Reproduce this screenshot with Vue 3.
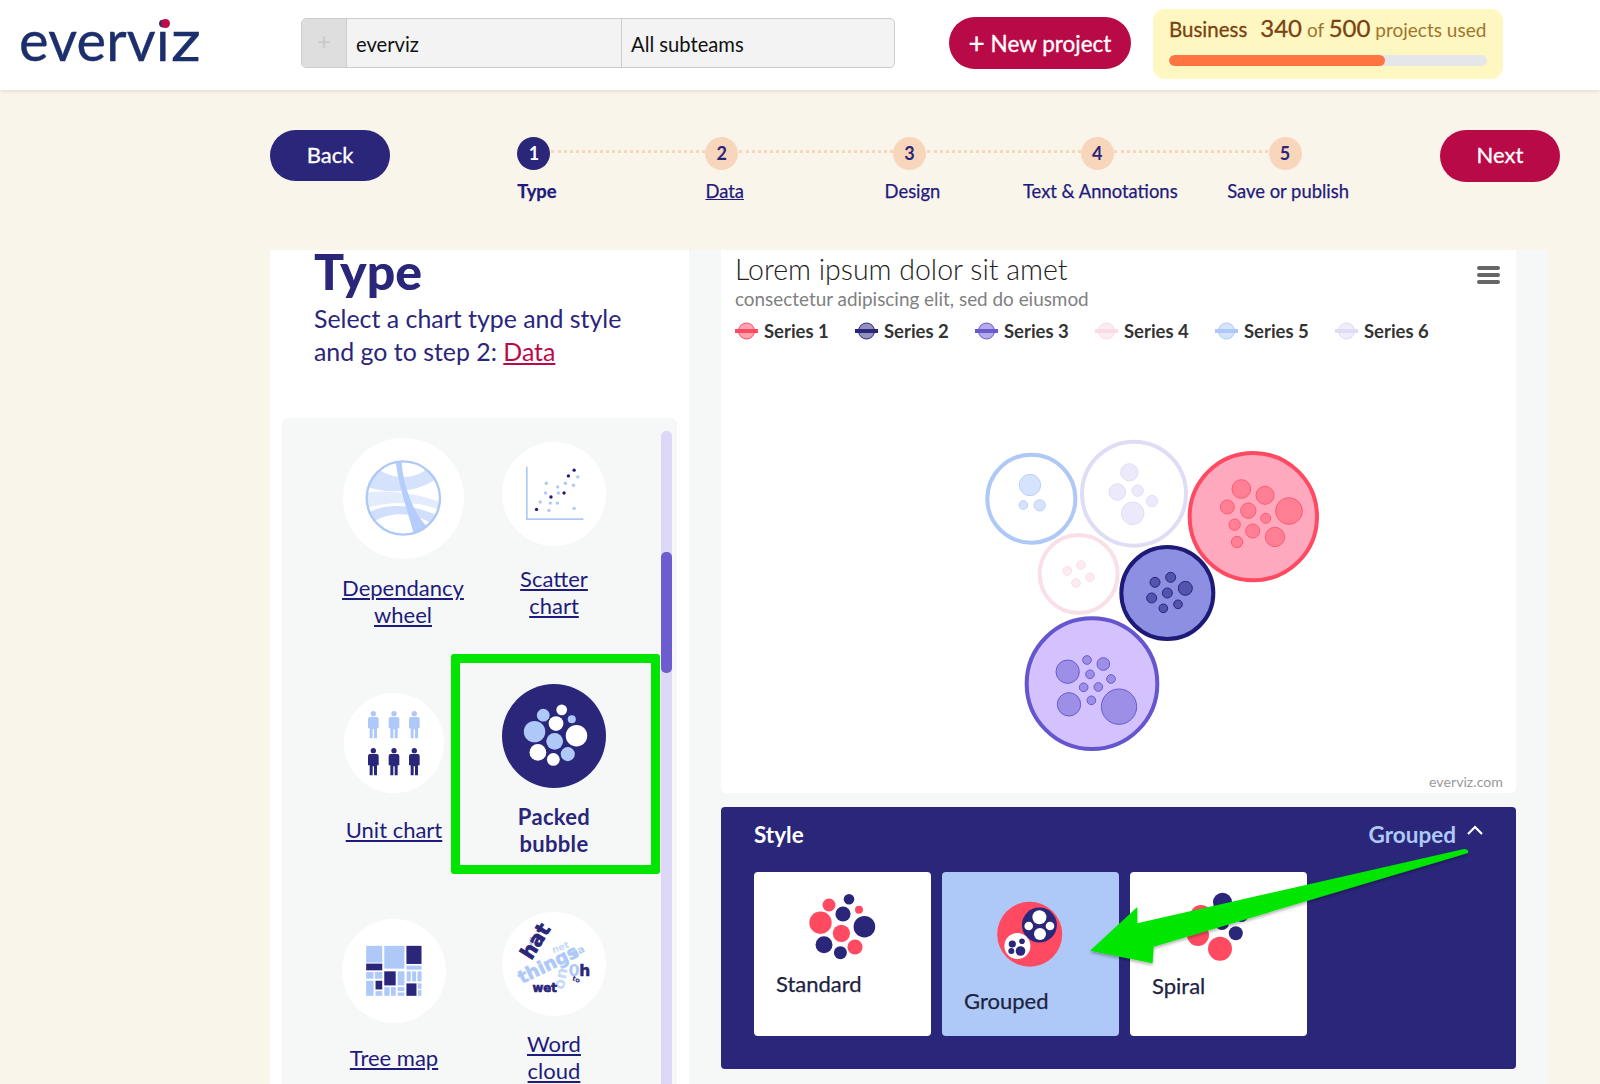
<script setup>
const steps = [
  { n: 1, label: 'Type', active: true },
  { n: 2, label: 'Data', link: true },
  { n: 3, label: 'Design' },
  { n: 4, label: 'Text & Annotations' },
  { n: 5, label: 'Save or publish' }
]

const legend = [
  { name: 'Series 1', color: '#ff4a62' },
  { name: 'Series 2', color: '#2a2679' },
  { name: 'Series 3', color: '#6a5ad0' },
  { name: 'Series 4', color: '#f9dbe6' },
  { name: 'Series 5', color: '#aec9f8' },
  { name: 'Series 6', color: '#dfdcf6' }
]

// coordinates are in the 1140x1020 viewBox of the chart
const groups = [
  { c: [214, 236, 132], fill: '#fff', stroke: '#aec9f8', innerFill: '#d6e3fd', innerStroke: '#b9d1fb',
    dots: [[210, 195, 32], [190, 255, 13], [239, 256, 17]] },
  { c: [522, 221, 156], fill: '#fff', stroke: '#dfdcf6', innerFill: '#ece9fa', innerStroke: '#e2dff7',
    dots: [[508, 157, 26], [472, 216, 25], [533, 212, 17], [576, 243, 17], [518, 280, 34]] },
  { c: [880, 290, 191], fill: '#ffa9bf', stroke: '#ff4a62', innerFill: '#ff7f95', innerStroke: '#ff5a72',
    dots: [[844, 207, 28], [915, 226, 27], [802, 261, 21], [865, 272, 23], [987, 273, 40], [917, 295, 15], [824, 314, 17], [878, 333, 21], [945, 351, 29], [831, 366, 17]] },
  { c: [356, 462, 117], fill: '#fff', stroke: '#f9dfe8', innerFill: '#fcecf2', innerStroke: '#f9dfe8',
    dots: [[322, 453, 13], [363, 435, 13], [390, 472, 13], [348, 489, 13]] },
  { c: [622, 519, 138], fill: '#8d90e2', stroke: '#1d1a78', innerFill: '#5454ae', innerStroke: '#2a2679',
    dots: [[585, 487, 15], [632, 472, 15], [676, 505, 21], [622, 519, 15], [575, 534, 15], [654, 553, 13], [610, 565, 13]] },
  { c: [396, 791, 196], fill: '#d3c2fd', stroke: '#6555cf', innerFill: '#9e8fe6', innerStroke: '#6a5ad0',
    dots: [[323, 755, 35], [381, 720, 13], [430, 732, 19], [390, 763, 13], [453, 777, 13], [371, 802, 13], [415, 801, 13], [327, 853, 35], [394, 841, 13], [477, 860, 53]] }
]

const scatterLight = [[829, 221], [863, 232], [886, 221], [923, 202], [910, 227], [827, 250], [865, 250], [811, 277], [841, 280], [862, 280], [837, 302], [912, 296]]
const scatterDark = [[912, 182], [895, 199], [843, 262], [882, 250], [800, 299]]

const packedLight = [[820, 165, 19], [905, 177, 12], [794, 214, 32], [854, 243, 25], [893, 281, 21]]
const packedWhite = [[875, 149, 16], [858, 190, 22], [919, 226, 32], [804, 276, 25], [850, 297, 19]]

const treeLight = [[290, 858, 48, 50], [344, 858, 60, 68], [410, 917, 45, 12], [290, 936, 22, 20], [316, 936, 22, 20], [384, 934, 20, 42], [411, 934, 12, 30], [427, 934, 12, 30], [443, 934, 12, 30], [290, 962, 22, 45], [318, 993, 20, 14], [344, 981, 16, 26], [364, 981, 14, 26], [384, 981, 20, 12], [384, 997, 20, 10], [444, 970, 11, 16], [444, 990, 11, 17]]
const treeDark = [[410, 858, 45, 54], [290, 911, 48, 20], [344, 934, 34, 42], [318, 962, 20, 26], [410, 970, 30, 37]]

const personPath = 'M-16 24 Q-16 18 -10 18 H10 Q16 18 16 24 V52 H11 V82 H2 V55 H-2 V82 H-11 V52 H-16 Z'
const people = [
  { x: 310, y: 152, fill: '#aec9f8' }, { x: 372, y: 152, fill: '#aec9f8' }, { x: 433, y: 152, fill: '#aec9f8' },
  { x: 310, y: 263, fill: '#2a2679' }, { x: 372, y: 263, fill: '#2a2679' }, { x: 433, y: 263, fill: '#2a2679' }
]
</script>

<template>
  <div class="page">
    <header class="topbar">
      <div class="logo">evervi<span class="logo-z">z</span><span class="logo-dot"></span></div>
      <div class="team-select">
        <span class="team-plus">+</span>
        <span class="team-cell team-name">everviz</span>
        <span class="team-cell">All subteams</span>
      </div>
      <button class="btn new-project"><span class="plus">+</span> New project</button>
      <div class="quota">
        <div class="quota-text">
          <span class="plan">Business</span>
          <b>340</b> <span class="soft">of</span> <b>500</b> <span class="soft">projects used</span>
        </div>
        <div class="quota-track"><div class="quota-fill" :style="{ width: (340 / 500) * 100 + '%' }"></div></div>
      </div>
    </header>

    <section class="wizard">
      <button class="btn back">Back</button>
      <ol class="steps">
        <li v-for="s in steps" :key="s.n" class="step" :class="{ active: s.active }">
          <span class="step-num">{{ s.n }}</span>
          <a v-if="s.link" class="step-label link">{{ s.label }}</a>
          <span v-else class="step-label">{{ s.label }}</span>
        </li>
      </ol>
      <button class="btn next">Next</button>
    </section>

    <main class="work">
      <aside class="left">
        <h1>Type</h1>
        <p class="intro">Select a chart type and style<br />and go to step 2: <a>Data</a></p>

        <div class="chooser">
          <div class="tiles">
            <div class="tile tile-wheel">
              <svg class="ico" width="121" height="121" viewBox="218 86 363 363">
                <defs><clipPath id="wheel"><circle cx="399" cy="266" r="110" /></clipPath></defs>
                <circle cx="399.5" cy="267" r="181.5" fill="#fff" />
                <g clip-path="url(#wheel)">
                  <path d="M318 172 C345 205 430 220 476 172 L500 206 C445 250 350 255 292 232 Z" fill="#d5e2fc" />
                  <path d="M286 250 C350 240 430 250 512 278 L512 304 C440 272 360 278 286 296 Z" fill="#e3ecfd" />
                  <path d="M298 308 C350 280 430 286 500 318 L484 344 C430 308 360 306 314 336 Z" fill="#d0dffb" />
                  <path d="M376 158 L394 158 C398 230 430 310 468 350 L430 372 C410 300 385 230 376 158 Z" fill="#b4cdfa" />
                </g>
                <circle cx="399" cy="266" r="110" fill="none" stroke="#aec9f8" stroke-width="7" />
              </svg>
              <a class="tile-label">Dependancy<br />wheel</a>
            </div>

            <div class="tile tile-scatter">
              <svg class="ico" width="104" height="104" viewBox="697 98 310 310">
                <circle cx="852" cy="253" r="155" fill="#fff" />
                <path d="M771 172 V328 H940" fill="none" stroke="#aec9f8" stroke-width="5" />
                <circle v-for="(d, i) in scatterLight" :key="'l' + i" :cx="d[0]" :cy="d[1]" r="5" fill="#aec9f8" />
                <circle v-for="(d, i) in scatterDark" :key="'d' + i" :cx="d[0]" :cy="d[1]" r="5" fill="#1d1a78" />
              </svg>
              <a class="tile-label">Scatter<br />chart</a>
            </div>

            <div class="tile tile-unit">
              <svg class="ico" width="100" height="100" viewBox="222 98 300 300">
                <circle cx="372" cy="248" r="150" fill="#fff" />
                <g v-for="(p, i) in people" :key="i" :transform="`translate(${p.x} ${p.y})`" :fill="p.fill">
                  <circle cx="0" cy="8" r="8" />
                  <path :d="personPath" />
                </g>
              </svg>
              <a class="tile-label">Unit chart</a>
            </div>

            <div class="tile tile-packed">
              <svg class="ico" width="104" height="104" viewBox="697 72 310 310">
                <circle cx="852" cy="227" r="155" fill="#2a2679" />
                <circle v-for="(d, i) in packedLight" :key="'l' + i" :cx="d[0]" :cy="d[1]" :r="d[2]" fill="#aec9f8" />
                <circle v-for="(d, i) in packedWhite" :key="'w' + i" :cx="d[0]" :cy="d[1]" :r="d[2]" fill="#fff" />
              </svg>
              <span class="tile-label current">Packed<br />bubble</span>
              <div class="green-box"></div>
            </div>

            <div class="tile tile-tree">
              <svg class="ico" width="104" height="104" viewBox="218 778 310 310">
                <circle cx="373" cy="933" r="155" fill="#fff" />
                <rect v-for="(r, i) in treeLight" :key="'l' + i" :x="r[0]" :y="r[1]" :width="r[2]" :height="r[3]" fill="#aec9f8" />
                <rect v-for="(r, i) in treeDark" :key="'d' + i" :x="r[0]" :y="r[1]" :width="r[2]" :height="r[3]" fill="#2a2679" />
              </svg>
              <a class="tile-label">Tree map</a>
            </div>

            <div class="tile tile-word">
              <svg class="ico cloud" width="104" height="104" viewBox="697 757 310 310">
                <circle cx="852" cy="912" r="155" fill="#fff" />
                <text x="775" y="862" font-size="42" fill="#aec9f8">I</text>
                <text x="850" y="880" font-size="28" fill="#c6d9fa" transform="rotate(-20 850 880)">net</text>
                <text x="908" y="892" font-size="30" fill="#aec9f8" transform="rotate(-25 908 892)">ga</text>
                <text x="756" y="972" font-size="54" fill="#aec9f8" stroke="#aec9f8" stroke-width="2" transform="rotate(-26 756 972)">things</text>
                <text x="784" y="902" font-size="60" fill="#2a2679" stroke="#2a2679" stroke-width="2.5" transform="rotate(-58 784 902)">hat</text>
                <text x="880" y="990" font-size="46" fill="#c6d9fa" transform="rotate(-78 880 990)">on</text>
                <text x="895" y="948" font-size="48" fill="#aec9f8">0</text>
                <text x="927" y="948" font-size="46" fill="#2a2679" stroke="#2a2679" stroke-width="1.5">h</text>
                <text x="788" y="994" font-size="35" fill="#2a2679" stroke="#2a2679" stroke-width="2">wet</text>
                <text x="905" y="960" font-size="20" fill="#2a2679" transform="rotate(22 905 960)">to</text>
              </svg>
              <a class="tile-label">Word<br />cloud</a>
            </div>
          </div>
          <div class="scroll-track"><div class="scroll-thumb"></div></div>
        </div>
      </aside>

      <div class="right">
        <div class="chart-card">
          <h2 class="chart-title">Lorem ipsum dolor sit amet</h2>
          <div class="chart-sub">consectetur adipiscing elit, sed do eiusmod</div>
          <div class="legend">
            <div v-for="l in legend" :key="l.name" class="legend-item">
              <svg width="23" height="18" viewBox="0 0 23 18">
                <circle cx="11.5" cy="9" r="8" :fill="l.color" fill-opacity="0.5" :stroke="l.color" />
                <rect x="0" y="7" width="23" height="4" :fill="l.color" />
              </svg>
              <span>{{ l.name }}</span>
            </div>
          </div>
          <span class="menu-icon"><i></i><i></i><i></i></span>
          <svg class="bubbles" width="380" height="340" viewBox="0 0 1140 1020">
            <g v-for="(g, i) in groups" :key="i">
              <circle :cx="g.c[0]" :cy="g.c[1]" :r="g.c[2]" :fill="g.fill" :stroke="g.stroke" stroke-width="12" />
              <circle v-for="(d, j) in g.dots" :key="j" :cx="d[0]" :cy="d[1]" :r="d[2]" :fill="g.innerFill" :stroke="g.innerStroke" stroke-width="3" />
            </g>
          </svg>
          <span class="credit">everviz.com</span>
        </div>

        <div class="style-panel">
          <div class="style-head">
            <span class="style-title">Style</span>
            <span class="style-current">Grouped</span>
            <svg class="chevron" width="18" height="10" viewBox="0 0 18 10">
              <path d="M2 9 L9 2 L16 9" fill="none" stroke="#fff" stroke-width="2.2" />
            </svg>
          </div>
          <div class="style-cards">
            <div class="style-card card-standard">
              <svg width="68" height="68" viewBox="89 93 68 68">
                <circle cx="100.5" cy="122.7" r="11.2" fill="#ff4a62" />
                <circle cx="109" cy="105" r="6.5" fill="#ff4a62" />
                <circle cx="129" cy="99.3" r="5.3" fill="#2a2679" />
                <circle cx="123" cy="114" r="7.6" fill="#2a2679" />
                <circle cx="139" cy="109.7" r="4" fill="#ff4a62" />
                <circle cx="144.4" cy="126.7" r="10.8" fill="#2a2679" />
                <circle cx="121.4" cy="133.3" r="8.6" fill="#ff4a62" />
                <circle cx="104" cy="144.7" r="8.5" fill="#2a2679" />
                <circle cx="135" cy="147" r="7.6" fill="#ff4a62" />
                <circle cx="120.4" cy="152.7" r="6.5" fill="#2a2679" />
              </svg>
              <span>Standard</span>
            </div>
            <div class="style-card selected card-grouped">
              <svg width="66" height="66" viewBox="277 101 66 66">
                <circle cx="309.7" cy="134.3" r="32.5" fill="#ff4a62" />
                <circle cx="319.4" cy="125" r="17.5" fill="#2a2679" />
                <circle cx="319.4" cy="117.3" r="7" fill="#fff" />
                <circle cx="308.7" cy="126" r="4.3" fill="#fff" />
                <circle cx="330" cy="126" r="4.3" fill="#fff" />
                <circle cx="320" cy="134" r="6" fill="#fff" />
                <circle cx="297.4" cy="146" r="13" fill="#fff" />
                <circle cx="292.3" cy="144" r="3.6" fill="#2a2679" />
                <circle cx="302" cy="141.3" r="2.8" fill="#2a2679" />
                <circle cx="291.3" cy="151" r="3" fill="#2a2679" />
                <circle cx="300.5" cy="151" r="4.8" fill="#2a2679" />
              </svg>
              <span>Grouped</span>
            </div>
            <div class="style-card card-spiral">
              <svg width="66" height="70" viewBox="465 92 66 70">
                <circle cx="502.5" cy="102.3" r="9.5" fill="#2a2679" />
                <circle cx="481" cy="116" r="11" fill="#ff4a62" />
                <circle cx="521.4" cy="115" r="7" fill="#2a2679" />
                <circle cx="502" cy="123" r="7" fill="#2a2679" />
                <circle cx="478" cy="135" r="11" fill="#ff4a62" />
                <circle cx="515.8" cy="133.3" r="7" fill="#2a2679" />
                <circle cx="500" cy="148.7" r="12" fill="#ff4a62" />
              </svg>
              <span>Spiral</span>
            </div>
          </div>
        </div>
      </div>
    </main>

    <svg class="arrow" width="1600" height="1084" viewBox="0 0 1600 1084">
      <defs>
        <filter id="arrow-shadow" x="-5%" y="-10%" width="110%" height="125%">
          <feDropShadow dx="0" dy="2" stdDeviation="1.5" flood-color="#000" flood-opacity="0.3" />
        </filter>
      </defs>
      <path
        d="M1090 950.7 L1137.3 907 L1137.3 923.3 L1464 849 Q1469 849 1468 853 L1153.7 946.7 L1152.6 963.3 Z"
        fill="#00e600"
        filter="url(#arrow-shadow)"
      />
    </svg>
  </div>
</template>

<style scoped>
.page {
  position: relative;
  width: 1600px;
  height: 1084px;
  overflow: hidden;
  background: #faf5eb;
  font-family: Lato, "Open Sans", sans-serif;
  color: #2a2679;
}

.btn {
  border: none;
  color: #fff;
  font-family: inherit;
  font-size: 22px;
  padding: 0 0 3px;
  -webkit-text-stroke: 0.3px #fff;
}

/* top bar */
.topbar {
  height: 90px;
  background: #fff;
  box-shadow: 0 1px 4px rgba(0, 0, 0, 0.12);
  display: flex;
  align-items: center;
  position: relative;
}
.logo {
  position: relative;
  margin-left: 19px;
  width: 282px;
  font-size: 56px;
  line-height: 60px;
  letter-spacing: 0.2px;
  color: #1c2f6c;
  margin-top: -11px;
  -webkit-text-stroke: 0.4px #1c2f6c;
}
.logo-z {
  display: inline-block;
  transform: scaleX(1.18);
  transform-origin: left center;
  margin-left: 1px;
}
.logo-dot {
  position: absolute;
  left: 141.5px;
  top: 9px;
  width: 9px;
  height: 9px;
  border-radius: 50%;
  background: #c00a48;
}
.team-select {
  width: 594px;
  height: 50px;
  box-sizing: border-box;
  margin-top: -4px;
  display: flex;
  background: #f3f3f3;
  border: 1px solid #ccc;
  border-radius: 5px;
  overflow: hidden;
  font-size: 20.2px;
  color: #111;
}
.team-plus {
  width: 44px;
  background: #dedede;
  color: #c8c8c8;
  border-right: 1px solid #ccc;
  text-align: center;
  line-height: 44px;
  font-size: 24px;
}
.team-cell {
  flex: 1;
  padding-left: 9px;
  line-height: 50px;
}
.team-name {
  flex: none;
  width: 265px;
  border-right: 1px solid #ccc;
}
.new-project {
  margin-left: 54px;
  margin-top: -4px;
  width: 182px;
  height: 52px;
  border-radius: 26px;
  background: #b90a48;
  font-size: 22.5px;
  padding: 0;
}
.plus {
  font-size: 28px;
  line-height: 20px;
  vertical-align: -2px;
}
.quota {
  margin-left: 22px;
  margin-top: -2px;
  width: 350px;
  height: 70px;
  box-sizing: border-box;
  padding: 5px 16px 0;
  background: #fff7c2;
  border-radius: 12px;
  color: #7a4210;
}
.quota-text {
  font-size: 19px;
  height: 36px;
  line-height: 28px;
  white-space: nowrap;
}
.quota-text b {
  font-size: 24px;
  font-weight: 400;
  -webkit-text-stroke: 0.3px #7a4210;
}
.plan {
  font-size: 20.5px;
  margin-right: 13px;
  -webkit-text-stroke: 0.3px #7a4210;
}
.soft {
  color: #a0742c;
}
.quota-track {
  height: 11px;
  margin-top: 5px;
  border-radius: 6px;
  background: #e5e6ea;
  overflow: hidden;
}
.quota-fill {
  height: 100%;
  background: #ff7440;
  border-radius: 6px;
}

/* wizard row */
.wizard {
  height: 160px;
  box-sizing: border-box;
  padding: 40px 0 0 270px;
  display: flex;
  align-items: flex-start;
}
.back,
.next {
  width: 120px;
  height: 51px;
  border-radius: 26px;
}
.back {
  background: #2a2679;
}
.next {
  background: #b90a48;
  height: 52px;
}
.steps {
  list-style: none;
  margin: 7px 0 0 50px;
  padding: 0;
  width: 939px;
  margin-right: 61px;
  display: flex;
}
.step {
  position: relative;
  width: 187.8px;
  display: flex;
  flex-direction: column;
  align-items: center;
}
.step:not(:last-child)::after {
  content: "";
  position: absolute;
  left: 111px;
  width: 154px;
  top: 13px;
  border-top: 3px dotted #f8d6bb;
}
.step-num {
  width: 33px;
  height: 33px;
  border-radius: 50%;
  background: #f8d6bb;
  font-weight: 700;
  font-size: 18px;
  line-height: 33px;
  text-align: center;
}
.step.active .step-num {
  background: #2a2679;
  color: #fff;
}
.step-label {
  margin-top: 9px;
  margin-left: 6px;
  font-size: 18.4px;
  line-height: 24px;
  white-space: nowrap;
  color: #1e1b7c;
  -webkit-text-stroke: 0.25px #1e1b7c;
}
.step.active .step-label {
  font-weight: 700;
}
.link {
  text-decoration: underline;
}

/* main columns */
.work {
  display: flex;
  margin-left: 270px;
  width: 1278px;
  height: 834px;
}
.left {
  width: 419px;
  flex: none;
  background: #fff;
  box-sizing: border-box;
  padding: 0 12px;
}
h1 {
  margin: 0 0 0 32px;
  font-size: 50px;
  line-height: 42px;
  font-weight: 900;
}
.intro {
  margin: 10px 0 0 32px;
  font-size: 24.9px;
  line-height: 33px;
  color: #2a2679;
}
.intro a {
  color: #b90a48;
  text-decoration: underline;
}
.chooser {
  position: relative;
  margin-top: 50px;
  width: 395px;
  height: 700px;
  background: #f6f8f8;
  border-radius: 6px 6px 0 0;
  overflow: hidden;
}
.tiles {
  padding: 20px 0 0 32px;
  display: grid;
  grid-template-columns: 160px 160px;
  grid-template-rows: 246px 228px auto;
}
.tile {
  position: relative;
  display: flex;
  flex-direction: column;
  align-items: center;
  text-align: center;
}
.ico {
  display: block;
  flex: none;
}
.tile-label {
  font-size: 22px;
  line-height: 27px;
  color: #1e1b7c;
  text-decoration: underline;
  white-space: nowrap;
}
.tile-label.current {
  text-decoration: none;
  font-weight: 700;
  color: #2a2679;
  letter-spacing: 0.3px;
}
.tile-wheel {
  margin-left: 18px;
}
.tile-wheel .tile-label {
  margin-top: 15px;
}
.tile-scatter {
  padding-top: 4px;
}
.tile-scatter .tile-label {
  margin-top: 19px;
}
.tile-unit {
  padding-top: 9px;
}
.tile-unit .tile-label {
  margin-top: 23px;
}
.tile-packed .tile-label {
  margin-top: 15px;
}
.tile-tree {
  padding-top: 7px;
}
.tile-tree .tile-label {
  margin-top: 21px;
}
.tile-word .tile-label {
  margin-top: 14px;
}
.cloud text {
  font-family: "DejaVu Sans", sans-serif;
  font-weight: 700;
}
.green-box {
  position: absolute;
  left: -23px;
  top: -30px;
  width: 209px;
  height: 220px;
  box-sizing: border-box;
  border: 9px solid #00e600;
  border-radius: 3px;
}
.scroll-track {
  position: absolute;
  left: 379px;
  top: 13px;
  bottom: 0;
  width: 11px;
  border-radius: 5px;
  background: #ddd8f7;
}
.scroll-thumb {
  margin-top: 121px;
  height: 121px;
  border-radius: 5px;
  background: #6c5ccf;
}

/* right side */
.right {
  flex: 1;
  background: #f6f8f8;
  padding: 0 32px;
}
.chart-card {
  position: relative;
  height: 543px;
  box-sizing: border-box;
  padding: 3px 14px 0;
  background: #fff;
  border-radius: 0 0 6px 6px;
}
.chart-title {
  margin: 0;
  font-size: 28.5px;
  line-height: 32px;
  font-weight: 300;
  color: #222;
}
.chart-sub {
  margin-top: 2px;
  font-size: 18.9px;
  line-height: 24px;
  color: #808080;
}
.legend {
  display: flex;
  margin-top: 8px;
  height: 24px;
}
.legend-item {
  width: 120px;
  flex: none;
  display: flex;
  align-items: center;
  gap: 6px;
  font-size: 18.5px;
  font-weight: 700;
  color: #333;
}
.menu-icon {
  position: absolute;
  right: 16px;
  top: 16px;
  width: 23px;
  display: flex;
  flex-direction: column;
  gap: 3px;
}
.menu-icon i {
  height: 4px;
  border-radius: 2px;
  background: #666;
}
.bubbles {
  display: block;
  margin: 77px 0 0 225px;
}
.credit {
  position: absolute;
  right: 13px;
  bottom: 3px;
  font-size: 14.2px;
  color: #999;
}
.style-panel {
  margin-top: 14px;
  height: 262px;
  box-sizing: border-box;
  padding: 0 33px;
  background: #2a2679;
  border-radius: 4px;
}
.style-head {
  height: 65px;
  display: flex;
  align-items: center;
  font-size: 22.5px;
  font-weight: 700;
  padding-bottom: 11px;
  box-sizing: border-box;
}
.style-title {
  color: #fff;
  flex: 1;
}
.style-current {
  color: #aec9f8;
}
.chevron {
  margin: -8px -1px 0 10px;
}
.style-cards {
  display: flex;
  gap: 11px;
}
.style-card {
  width: 177px;
  height: 164px;
  background: #fff;
  border-radius: 4px;
  box-sizing: border-box;
  padding-left: 22px;
  font-size: 22px;
  line-height: 26px;
  color: #1c2340;
  -webkit-text-stroke: 0.25px #1c2340;
}
.style-card svg {
  display: block;
  margin-left: 33px;
}
.style-card.selected {
  background: #aec9f8;
}
.card-standard {
  padding-top: 21px;
}
.card-standard svg {
  margin-bottom: 10px;
}
.card-grouped {
  padding-top: 29px;
}
.card-grouped svg {
  margin-bottom: 21px;
}
.card-spiral {
  padding-top: 20px;
}
.card-spiral svg {
  margin-bottom: 11px;
}
.arrow {
  position: absolute;
  left: 0;
  top: 0;
  pointer-events: none;
}
</style>
